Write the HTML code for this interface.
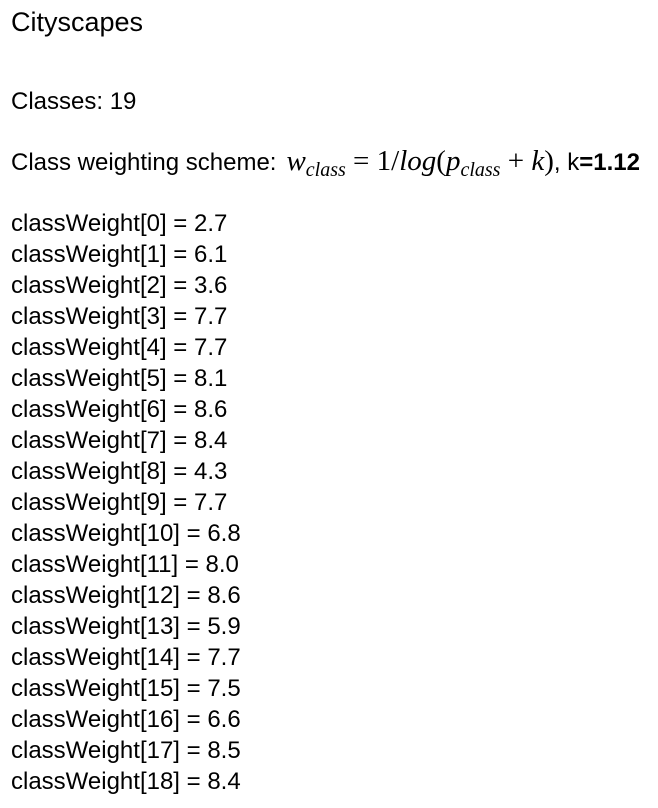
<!DOCTYPE html>
<html><head><meta charset="utf-8"><style>
body{margin:0;width:658px;height:808px;background:#fff;font-family:"Liberation Sans",Arial,sans-serif;color:#000;position:relative;overflow:hidden}
.t{position:absolute;left:11px;white-space:nowrap;font-size:24px;line-height:31px}
.m{font-family:"Liberation Serif",serif;font-style:italic}
.r{font-family:"Liberation Serif",serif}
.f{font-size:29px;line-height:31px;margin-left:10px}
.s{font-size:20px;vertical-align:-6px}
</style></head><body>
<div class="t" style="top:6px;font-size:27px;line-height:32px">Cityscapes</div>
<div class="t" style="top:86px">Classes: 19</div>
<div class="t" style="top:146px">Class weighting scheme:<span class="f"><span class="m">w<span class="s">class</span></span><span class="r"> = 1/</span><span class="m">log</span><span class="r">(</span><span class="m">p<span class="s">class</span></span><span class="r"> + </span><span class="m">k</span><span class="r">)</span></span>, k<b>=1.12</b></div>
<div class="t" style="top:208px">classWeight[0] = 2.7<br>classWeight[1] = 6.1<br>classWeight[2] = 3.6<br>classWeight[3] = 7.7<br>classWeight[4] = 7.7<br>classWeight[5] = 8.1<br>classWeight[6] = 8.6<br>classWeight[7] = 8.4<br>classWeight[8] = 4.3<br>classWeight[9] = 7.7<br>classWeight[10] = 6.8<br>classWeight[11] = 8.0<br>classWeight[12] = 8.6<br>classWeight[13] = 5.9<br>classWeight[14] = 7.7<br>classWeight[15] = 7.5<br>classWeight[16] = 6.6<br>classWeight[17] = 8.5<br>classWeight[18] = 8.4</div>
</body></html>
